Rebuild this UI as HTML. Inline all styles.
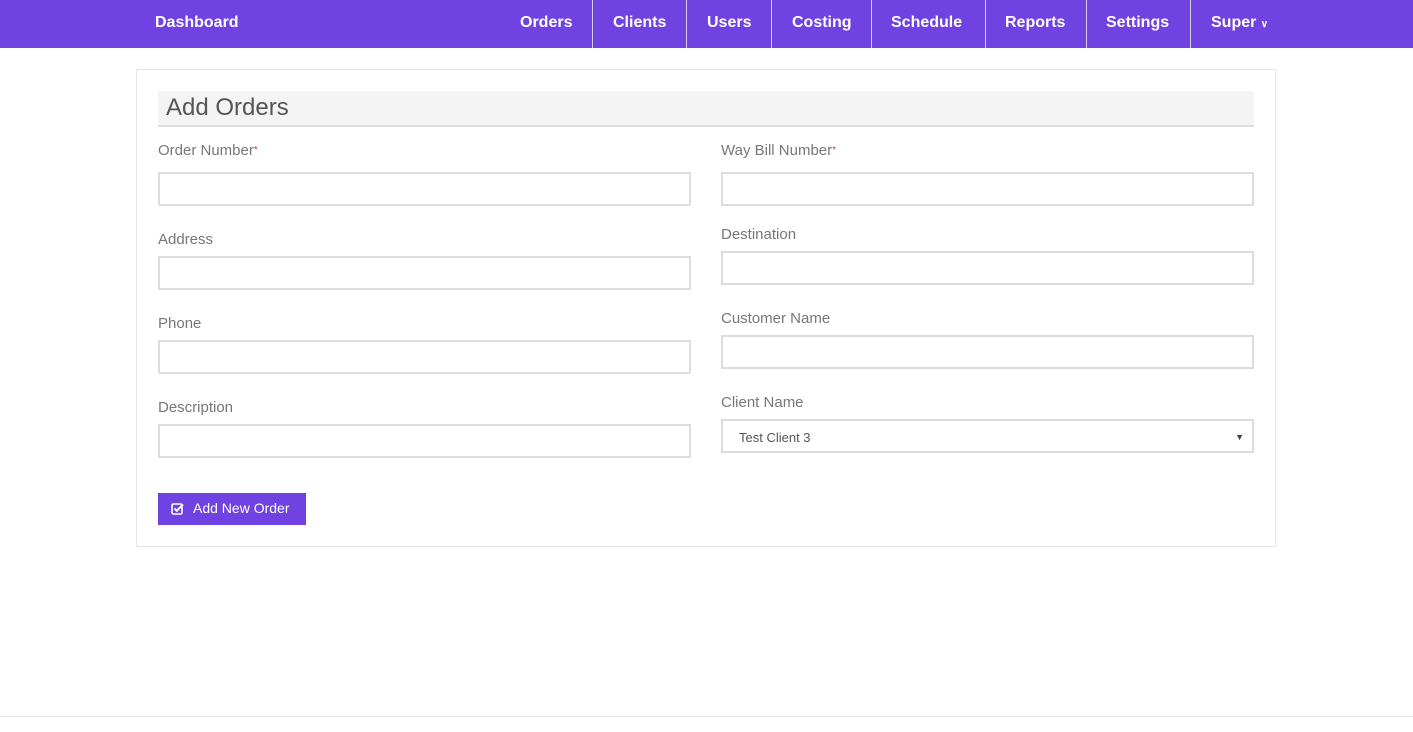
<!DOCTYPE html>
<html><head><style>
*{box-sizing:border-box;margin:0;padding:0}
body{width:1413px;height:732px;background:#fff;font-family:"Liberation Sans",sans-serif;position:relative;overflow:hidden}
.nav{position:absolute;left:0;top:0;width:1413px;height:48px;background:#6f42e1}
.nav span{position:absolute;top:0;height:48px;line-height:46px;color:#fff;font-weight:bold;font-size:16px;text-align:center}
.sep{position:absolute;top:0;width:1px;height:48px;background:#d8cef5}
.panel{position:absolute;left:136px;top:69px;width:1140px;height:478px;border:1px solid #e6e6e6}
.hd{position:absolute;left:158px;top:91px;width:1096px;height:36px;background:#f4f4f4;border-bottom:2px solid #ddd;font-size:24px;color:#555;padding-left:8px;line-height:34px}
.lb{position:absolute;font-size:15px;color:#777;line-height:18px;margin-top:2px}
.lb i{color:#d33;font-style:normal;font-size:10px;vertical-align:top}
.in{position:absolute;width:533px;height:34px;border:2px solid #ddd;background:#fff}
.btn{position:absolute;left:158px;top:493px;width:148px;height:32px;background:#6f42e1;color:#fff;font-size:14px;line-height:31px;padding-left:35px}
</style></head><body>
<div class="nav">
<span style="left:155px">Dashboard</span>
<span style="left:520px">Orders</span>
<div class="sep" style="left:592px"></div>
<span style="left:613px">Clients</span>
<div class="sep" style="left:686px"></div>
<span style="left:707px">Users</span>
<div class="sep" style="left:771px"></div>
<span style="left:792px">Costing</span>
<div class="sep" style="left:871px"></div>
<span style="left:891px">Schedule</span>
<div class="sep" style="left:985px"></div>
<span style="left:1005px">Reports</span>
<div class="sep" style="left:1086px"></div>
<span style="left:1106px">Settings</span>
<div class="sep" style="left:1190px"></div>
<span style="left:1211px">Super <small style="font-size:10px">&#x2228;</small></span>
</div>
<div class="panel"></div>
<div class="hd">Add Orders</div>
<div class="lb" style="left:158px;top:140px">Order Number<i>*</i></div>
<div class="in" style="left:158px;top:172px"></div>
<div class="lb" style="left:158px;top:229px">Address</div>
<div class="in" style="left:158px;top:256px"></div>
<div class="lb" style="left:158px;top:313px">Phone</div>
<div class="in" style="left:158px;top:340px"></div>
<div class="lb" style="left:158px;top:397px">Description</div>
<div class="in" style="left:158px;top:424px"></div>
<div class="lb" style="left:721px;top:140px">Way Bill Number<i>*</i></div>
<div class="in" style="left:721px;top:172px"></div>
<div class="lb" style="left:721px;top:224px">Destination</div>
<div class="in" style="left:721px;top:251px"></div>
<div class="lb" style="left:721px;top:308px">Customer Name</div>
<div class="in" style="left:721px;top:335px"></div>
<div class="lb" style="left:721px;top:392px">Client Name</div>
<div class="in" style="left:721px;top:419px;font-size:13px;color:#555;padding-left:16px;line-height:33px">Test Client 3<span style="position:absolute;right:8px;font-size:9px;color:#444">&#9660;</span></div>
<div class="btn"><svg style="position:absolute;left:13px;top:9px" width="13" height="13" viewBox="0 0 13 13"><rect x="1" y="2" width="10" height="10" rx="1.5" fill="none" stroke="#fff" stroke-width="1.6"/><path d="M3.5 6.5l2.3 2.3L12 2.5" fill="none" stroke="#fff" stroke-width="2"/></svg>Add New Order</div>
<div style="position:absolute;left:0;top:716px;width:1413px;height:1px;background:#e6e6e6"></div>
</body></html>
